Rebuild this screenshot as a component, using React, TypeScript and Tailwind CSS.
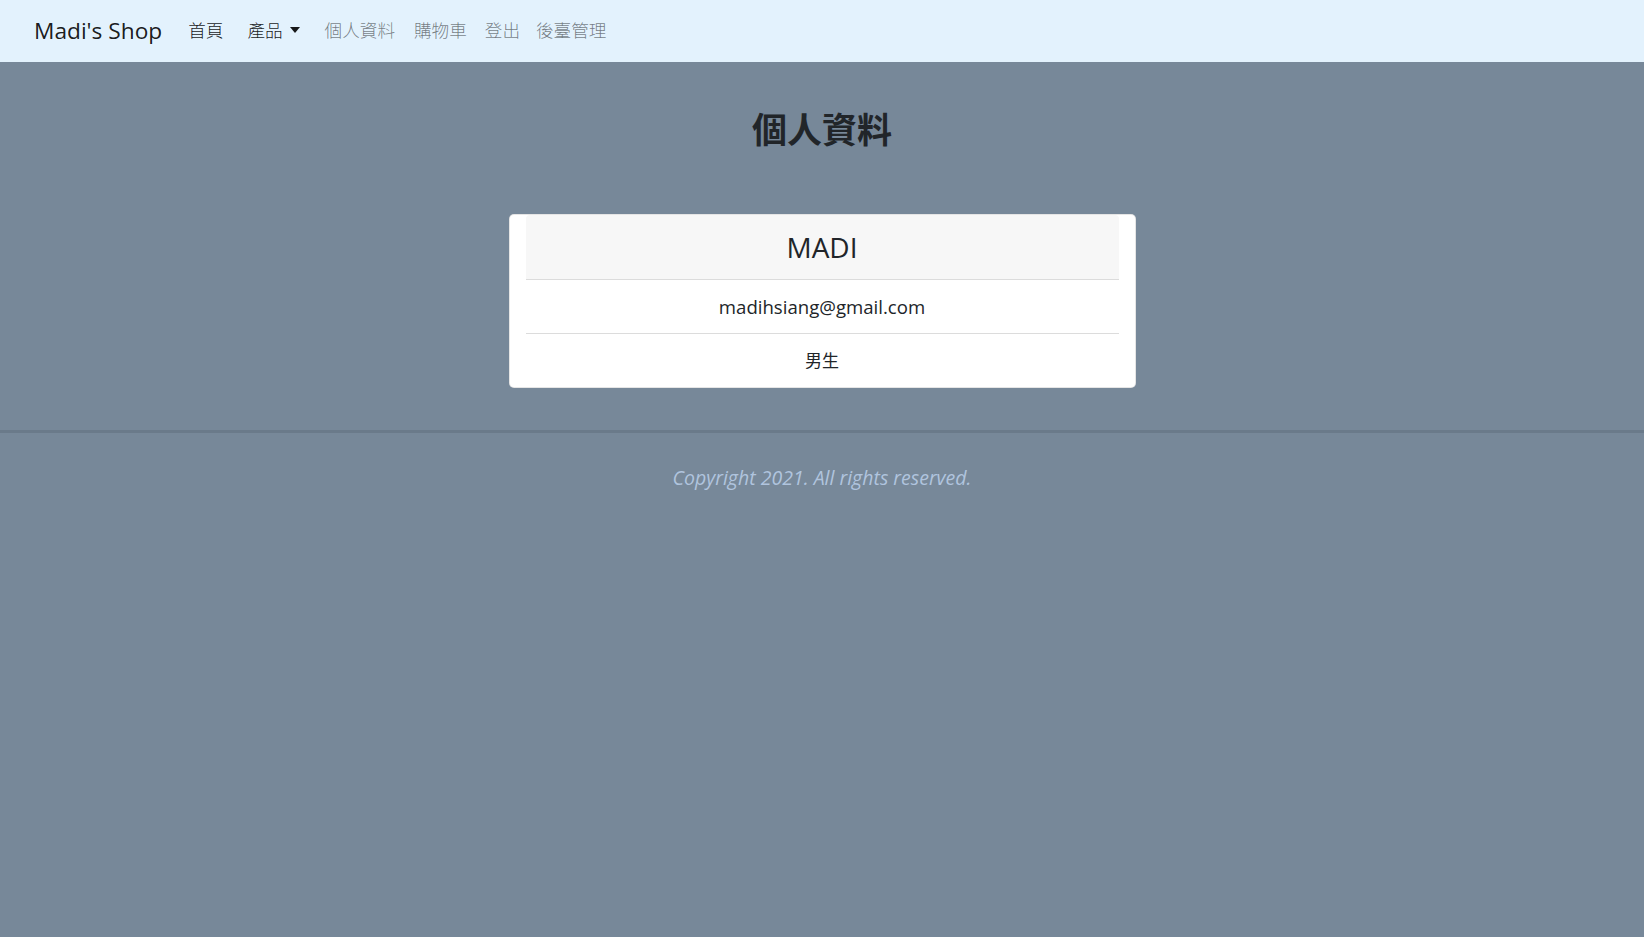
import React from "react";

const latin = "'Open Sans', 'Noto Sans CJK TC', sans-serif";

export default function App() {
  return (
    <div
      className="min-h-screen w-full bg-[#778899] text-[#212529]"
      style={{ fontFamily: latin }}
    >
      <nav className="flex h-[62px] items-center bg-[#e3f2fd] px-[34px]">
        <span className="mr-[18px] text-[22.7px] leading-none text-black/90">Madi&apos;s Shop</span>
        <div className="flex items-center pb-[1px] text-[17.6px] font-light">
          <span className="px-[8px] text-black/90">首頁</span>
          <span className="ml-[8px] flex items-center px-[8px] text-black/90">
            產品
            <span className="ml-[7px] inline-block h-0 w-0 border-x-[5.5px] border-t-[6px] border-x-transparent border-t-black/90" />
          </span>
          <span className="ml-[9px] px-[8px] text-black/50">個人資料</span>
          <span className="ml-[3px] px-[8px] text-black/50">購物車</span>
          <span className="ml-[2px] px-[8px] text-black/50">登出</span>
          <span className="ml-0 px-[8px] text-black/50">後臺管理</span>
        </div>
      </nav>

      <h2 className="mt-[47px] text-center text-[35px] font-bold leading-[42px] text-[#212529]">
        個人資料
      </h2>

      <div className="mx-auto mt-[63px] w-[627px] rounded-[5px] border border-black/10 bg-white px-[16px]">
        <div className="flex h-[65px] items-center justify-center rounded-t-[4px] border-b border-[#dcdcdc] bg-[#f7f7f7] text-[28px] text-[#212529]">
          MADI
        </div>
        <div className="flex h-[54px] items-center justify-center border-b border-[#dcdcdc] text-[18.6px]">
          madihsiang@gmail.com
        </div>
        <div className="flex h-[53px] items-center justify-center text-[17px]">男生</div>
      </div>

      <div className="mt-[42px] h-[3px] w-full bg-[#6a7a8a]" />

      <p className="mt-[30px] text-center text-[19.5px] italic text-[#b0c4de]">
        Copyright 2021. All rights reserved.
      </p>
    </div>
  );
}
